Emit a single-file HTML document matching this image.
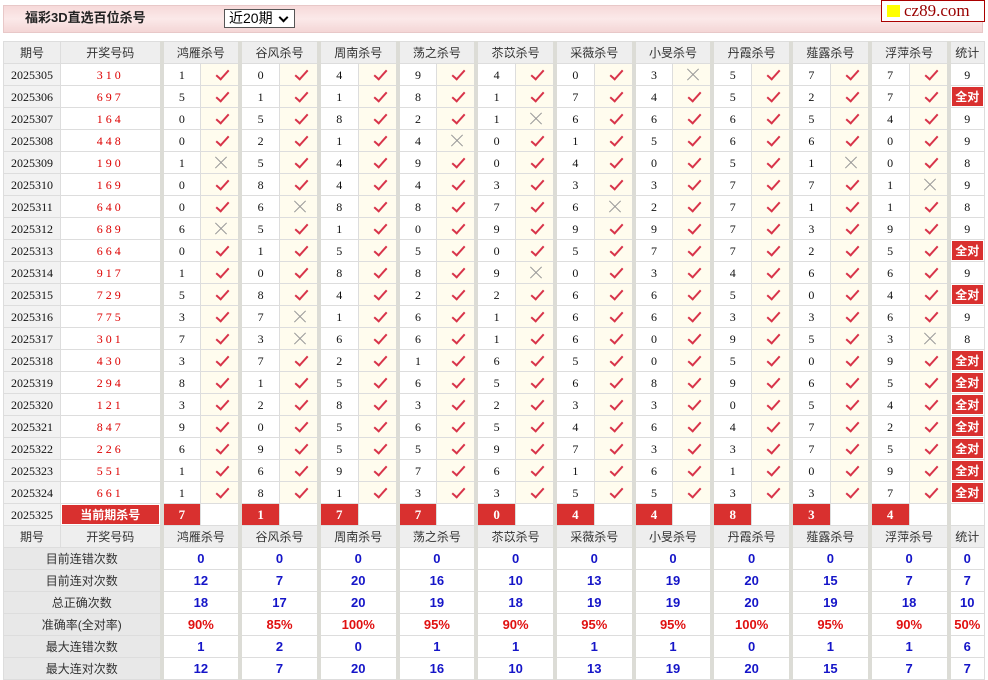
<!DOCTYPE html>
<html><head><meta charset="utf-8"><style>
body{margin:0;background:#fff;width:988px;height:680px;overflow:hidden;position:relative;font-family:"Liberation Sans","Noto Sans CJK SC",sans-serif}
.bar{position:absolute;left:3px;top:5px;width:980px;height:28px;background:linear-gradient(#f6d9d9,#fbe9e9 50%,#f4d6d6);border:1px solid #e8c8c8;box-sizing:border-box}
.bar b{position:absolute;left:21px;top:4px;font-size:13px;line-height:16px;color:#222}
.sel{position:absolute;left:224px;top:9px;width:71px;height:19px;border:1px solid #555;background:#fff;box-sizing:border-box;font-size:14px;line-height:17px;padding-left:4px}
.sel:after{content:"";position:absolute;right:7px;top:4px;width:5px;height:5px;border-right:2px solid #000;border-bottom:2px solid #000;transform:rotate(45deg)}
.logo{position:absolute;left:881px;top:0;width:104px;height:22px;border:1px solid #a00;background:#fff;box-sizing:border-box;font-family:"Liberation Serif",serif;font-size:17px;color:#900;line-height:20px;padding-left:22px}
.logo:before{content:"";position:absolute;left:5px;top:4px;width:13px;height:12px;background:#ff0}
table{position:absolute;left:3px;top:41px;border-collapse:collapse;table-layout:fixed;width:982px}
tr{height:22px}
td{height:21px;line-height:14px;border:1px solid #ddd;padding:0;font-size:12px;text-align:center;font-family:"Liberation Serif","Noto Sans CJK SC",serif;color:#111;position:relative;overflow:hidden}
tr.h td{background:#eee;font-family:"Liberation Sans","Noto Sans CJK SC",sans-serif;color:#333}
td.p{background:#f2f2f2}
td.k{color:#d00;letter-spacing:3px}
td.g{border-left:4px solid #dcdcd6}
td.y,td.x{background:#fffcee}
td.y:after{content:"";position:absolute;left:18px;top:3px;width:5px;height:11px;border-right:2px solid #d8344a;border-bottom:2px solid #d8344a;transform:rotate(42deg)}
td.x:before,td.x:after{content:"";position:absolute;left:12px;top:10px;width:16px;height:1px;background:#999;transform:rotate(45deg)}
td.x:after{transform:rotate(-45deg)}
td.a{background:#d9302f;color:#fff;font-weight:bold;font-family:"Liberation Sans","Noto Sans CJK SC",sans-serif;font-size:12px;box-shadow:inset 0 0 0 1px #fff}
td.r{background:#d9302f;color:#fff;font-weight:bold;font-size:13px}
td.w{background:#fff}
td.l{background:#e8e8e8;font-family:"Liberation Sans","Noto Sans CJK SC",sans-serif;color:#333;font-size:12px}
td.v{color:#1515c8;font-weight:bold;font-family:"Liberation Sans",sans-serif;font-size:13px}
td.v.red{color:#e01010}
</style></head><body>
<div class="bar"><b>福彩3D直选百位杀号</b></div>
<div class="sel">近20期</div>
<div class="logo">cz89.com</div>
<table>
<colgroup><col style="width:57px"><col style="width:101px"><col span="20"><col style="width:36px"></colgroup>
<tr class="h"><td>期号</td><td>开奖号码</td><td class="g" colspan="2">鸿雁杀号</td><td class="g" colspan="2">谷风杀号</td><td class="g" colspan="2">周南杀号</td><td class="g" colspan="2">荡之杀号</td><td class="g" colspan="2">苶苡杀号</td><td class="g" colspan="2">采薇杀号</td><td class="g" colspan="2">小旻杀号</td><td class="g" colspan="2">丹霞杀号</td><td class="g" colspan="2">薤露杀号</td><td class="g" colspan="2">浮萍杀号</td><td class="g">统计</td></tr>
<tr><td class="p">2025305</td><td class="k">310</td><td class="g">1</td><td class="y"></td><td class="g">0</td><td class="y"></td><td class="g">4</td><td class="y"></td><td class="g">9</td><td class="y"></td><td class="g">4</td><td class="y"></td><td class="g">0</td><td class="y"></td><td class="g">3</td><td class="x"></td><td class="g">5</td><td class="y"></td><td class="g">7</td><td class="y"></td><td class="g">7</td><td class="y"></td><td class="g">9</td></tr>
<tr><td class="p">2025306</td><td class="k">697</td><td class="g">5</td><td class="y"></td><td class="g">1</td><td class="y"></td><td class="g">1</td><td class="y"></td><td class="g">8</td><td class="y"></td><td class="g">1</td><td class="y"></td><td class="g">7</td><td class="y"></td><td class="g">4</td><td class="y"></td><td class="g">5</td><td class="y"></td><td class="g">2</td><td class="y"></td><td class="g">7</td><td class="y"></td><td class="g a">全对</td></tr>
<tr><td class="p">2025307</td><td class="k">164</td><td class="g">0</td><td class="y"></td><td class="g">5</td><td class="y"></td><td class="g">8</td><td class="y"></td><td class="g">2</td><td class="y"></td><td class="g">1</td><td class="x"></td><td class="g">6</td><td class="y"></td><td class="g">6</td><td class="y"></td><td class="g">6</td><td class="y"></td><td class="g">5</td><td class="y"></td><td class="g">4</td><td class="y"></td><td class="g">9</td></tr>
<tr><td class="p">2025308</td><td class="k">448</td><td class="g">0</td><td class="y"></td><td class="g">2</td><td class="y"></td><td class="g">1</td><td class="y"></td><td class="g">4</td><td class="x"></td><td class="g">0</td><td class="y"></td><td class="g">1</td><td class="y"></td><td class="g">5</td><td class="y"></td><td class="g">6</td><td class="y"></td><td class="g">6</td><td class="y"></td><td class="g">0</td><td class="y"></td><td class="g">9</td></tr>
<tr><td class="p">2025309</td><td class="k">190</td><td class="g">1</td><td class="x"></td><td class="g">5</td><td class="y"></td><td class="g">4</td><td class="y"></td><td class="g">9</td><td class="y"></td><td class="g">0</td><td class="y"></td><td class="g">4</td><td class="y"></td><td class="g">0</td><td class="y"></td><td class="g">5</td><td class="y"></td><td class="g">1</td><td class="x"></td><td class="g">0</td><td class="y"></td><td class="g">8</td></tr>
<tr><td class="p">2025310</td><td class="k">169</td><td class="g">0</td><td class="y"></td><td class="g">8</td><td class="y"></td><td class="g">4</td><td class="y"></td><td class="g">4</td><td class="y"></td><td class="g">3</td><td class="y"></td><td class="g">3</td><td class="y"></td><td class="g">3</td><td class="y"></td><td class="g">7</td><td class="y"></td><td class="g">7</td><td class="y"></td><td class="g">1</td><td class="x"></td><td class="g">9</td></tr>
<tr><td class="p">2025311</td><td class="k">640</td><td class="g">0</td><td class="y"></td><td class="g">6</td><td class="x"></td><td class="g">8</td><td class="y"></td><td class="g">8</td><td class="y"></td><td class="g">7</td><td class="y"></td><td class="g">6</td><td class="x"></td><td class="g">2</td><td class="y"></td><td class="g">7</td><td class="y"></td><td class="g">1</td><td class="y"></td><td class="g">1</td><td class="y"></td><td class="g">8</td></tr>
<tr><td class="p">2025312</td><td class="k">689</td><td class="g">6</td><td class="x"></td><td class="g">5</td><td class="y"></td><td class="g">1</td><td class="y"></td><td class="g">0</td><td class="y"></td><td class="g">9</td><td class="y"></td><td class="g">9</td><td class="y"></td><td class="g">9</td><td class="y"></td><td class="g">7</td><td class="y"></td><td class="g">3</td><td class="y"></td><td class="g">9</td><td class="y"></td><td class="g">9</td></tr>
<tr><td class="p">2025313</td><td class="k">664</td><td class="g">0</td><td class="y"></td><td class="g">1</td><td class="y"></td><td class="g">5</td><td class="y"></td><td class="g">5</td><td class="y"></td><td class="g">0</td><td class="y"></td><td class="g">5</td><td class="y"></td><td class="g">7</td><td class="y"></td><td class="g">7</td><td class="y"></td><td class="g">2</td><td class="y"></td><td class="g">5</td><td class="y"></td><td class="g a">全对</td></tr>
<tr><td class="p">2025314</td><td class="k">917</td><td class="g">1</td><td class="y"></td><td class="g">0</td><td class="y"></td><td class="g">8</td><td class="y"></td><td class="g">8</td><td class="y"></td><td class="g">9</td><td class="x"></td><td class="g">0</td><td class="y"></td><td class="g">3</td><td class="y"></td><td class="g">4</td><td class="y"></td><td class="g">6</td><td class="y"></td><td class="g">6</td><td class="y"></td><td class="g">9</td></tr>
<tr><td class="p">2025315</td><td class="k">729</td><td class="g">5</td><td class="y"></td><td class="g">8</td><td class="y"></td><td class="g">4</td><td class="y"></td><td class="g">2</td><td class="y"></td><td class="g">2</td><td class="y"></td><td class="g">6</td><td class="y"></td><td class="g">6</td><td class="y"></td><td class="g">5</td><td class="y"></td><td class="g">0</td><td class="y"></td><td class="g">4</td><td class="y"></td><td class="g a">全对</td></tr>
<tr><td class="p">2025316</td><td class="k">775</td><td class="g">3</td><td class="y"></td><td class="g">7</td><td class="x"></td><td class="g">1</td><td class="y"></td><td class="g">6</td><td class="y"></td><td class="g">1</td><td class="y"></td><td class="g">6</td><td class="y"></td><td class="g">6</td><td class="y"></td><td class="g">3</td><td class="y"></td><td class="g">3</td><td class="y"></td><td class="g">6</td><td class="y"></td><td class="g">9</td></tr>
<tr><td class="p">2025317</td><td class="k">301</td><td class="g">7</td><td class="y"></td><td class="g">3</td><td class="x"></td><td class="g">6</td><td class="y"></td><td class="g">6</td><td class="y"></td><td class="g">1</td><td class="y"></td><td class="g">6</td><td class="y"></td><td class="g">0</td><td class="y"></td><td class="g">9</td><td class="y"></td><td class="g">5</td><td class="y"></td><td class="g">3</td><td class="x"></td><td class="g">8</td></tr>
<tr><td class="p">2025318</td><td class="k">430</td><td class="g">3</td><td class="y"></td><td class="g">7</td><td class="y"></td><td class="g">2</td><td class="y"></td><td class="g">1</td><td class="y"></td><td class="g">6</td><td class="y"></td><td class="g">5</td><td class="y"></td><td class="g">0</td><td class="y"></td><td class="g">5</td><td class="y"></td><td class="g">0</td><td class="y"></td><td class="g">9</td><td class="y"></td><td class="g a">全对</td></tr>
<tr><td class="p">2025319</td><td class="k">294</td><td class="g">8</td><td class="y"></td><td class="g">1</td><td class="y"></td><td class="g">5</td><td class="y"></td><td class="g">6</td><td class="y"></td><td class="g">5</td><td class="y"></td><td class="g">6</td><td class="y"></td><td class="g">8</td><td class="y"></td><td class="g">9</td><td class="y"></td><td class="g">6</td><td class="y"></td><td class="g">5</td><td class="y"></td><td class="g a">全对</td></tr>
<tr><td class="p">2025320</td><td class="k">121</td><td class="g">3</td><td class="y"></td><td class="g">2</td><td class="y"></td><td class="g">8</td><td class="y"></td><td class="g">3</td><td class="y"></td><td class="g">2</td><td class="y"></td><td class="g">3</td><td class="y"></td><td class="g">3</td><td class="y"></td><td class="g">0</td><td class="y"></td><td class="g">5</td><td class="y"></td><td class="g">4</td><td class="y"></td><td class="g a">全对</td></tr>
<tr><td class="p">2025321</td><td class="k">847</td><td class="g">9</td><td class="y"></td><td class="g">0</td><td class="y"></td><td class="g">5</td><td class="y"></td><td class="g">6</td><td class="y"></td><td class="g">5</td><td class="y"></td><td class="g">4</td><td class="y"></td><td class="g">6</td><td class="y"></td><td class="g">4</td><td class="y"></td><td class="g">7</td><td class="y"></td><td class="g">2</td><td class="y"></td><td class="g a">全对</td></tr>
<tr><td class="p">2025322</td><td class="k">226</td><td class="g">6</td><td class="y"></td><td class="g">9</td><td class="y"></td><td class="g">5</td><td class="y"></td><td class="g">5</td><td class="y"></td><td class="g">9</td><td class="y"></td><td class="g">7</td><td class="y"></td><td class="g">3</td><td class="y"></td><td class="g">3</td><td class="y"></td><td class="g">7</td><td class="y"></td><td class="g">5</td><td class="y"></td><td class="g a">全对</td></tr>
<tr><td class="p">2025323</td><td class="k">551</td><td class="g">1</td><td class="y"></td><td class="g">6</td><td class="y"></td><td class="g">9</td><td class="y"></td><td class="g">7</td><td class="y"></td><td class="g">6</td><td class="y"></td><td class="g">1</td><td class="y"></td><td class="g">6</td><td class="y"></td><td class="g">1</td><td class="y"></td><td class="g">0</td><td class="y"></td><td class="g">9</td><td class="y"></td><td class="g a">全对</td></tr>
<tr><td class="p">2025324</td><td class="k">661</td><td class="g">1</td><td class="y"></td><td class="g">8</td><td class="y"></td><td class="g">1</td><td class="y"></td><td class="g">3</td><td class="y"></td><td class="g">3</td><td class="y"></td><td class="g">5</td><td class="y"></td><td class="g">5</td><td class="y"></td><td class="g">3</td><td class="y"></td><td class="g">3</td><td class="y"></td><td class="g">7</td><td class="y"></td><td class="g a">全对</td></tr>
<tr><td class="p">2025325</td><td class="a">当前期杀号</td><td class="g r">7</td><td class="w"></td><td class="g r">1</td><td class="w"></td><td class="g r">7</td><td class="w"></td><td class="g r">7</td><td class="w"></td><td class="g r">0</td><td class="w"></td><td class="g r">4</td><td class="w"></td><td class="g r">4</td><td class="w"></td><td class="g r">8</td><td class="w"></td><td class="g r">3</td><td class="w"></td><td class="g r">4</td><td class="w"></td><td class="g w"></td></tr>
<tr class="h"><td>期号</td><td>开奖号码</td><td class="g" colspan="2">鸿雁杀号</td><td class="g" colspan="2">谷风杀号</td><td class="g" colspan="2">周南杀号</td><td class="g" colspan="2">荡之杀号</td><td class="g" colspan="2">苶苡杀号</td><td class="g" colspan="2">采薇杀号</td><td class="g" colspan="2">小旻杀号</td><td class="g" colspan="2">丹霞杀号</td><td class="g" colspan="2">薤露杀号</td><td class="g" colspan="2">浮萍杀号</td><td class="g">统计</td></tr>
<tr><td class="l" colspan="2">目前连错次数</td><td class="g v" colspan="2">0</td><td class="g v" colspan="2">0</td><td class="g v" colspan="2">0</td><td class="g v" colspan="2">0</td><td class="g v" colspan="2">0</td><td class="g v" colspan="2">0</td><td class="g v" colspan="2">0</td><td class="g v" colspan="2">0</td><td class="g v" colspan="2">0</td><td class="g v" colspan="2">0</td><td class="g v">0</td></tr>
<tr><td class="l" colspan="2">目前连对次数</td><td class="g v" colspan="2">12</td><td class="g v" colspan="2">7</td><td class="g v" colspan="2">20</td><td class="g v" colspan="2">16</td><td class="g v" colspan="2">10</td><td class="g v" colspan="2">13</td><td class="g v" colspan="2">19</td><td class="g v" colspan="2">20</td><td class="g v" colspan="2">15</td><td class="g v" colspan="2">7</td><td class="g v">7</td></tr>
<tr><td class="l" colspan="2">总正确次数</td><td class="g v" colspan="2">18</td><td class="g v" colspan="2">17</td><td class="g v" colspan="2">20</td><td class="g v" colspan="2">19</td><td class="g v" colspan="2">18</td><td class="g v" colspan="2">19</td><td class="g v" colspan="2">19</td><td class="g v" colspan="2">20</td><td class="g v" colspan="2">19</td><td class="g v" colspan="2">18</td><td class="g v">10</td></tr>
<tr><td class="l" colspan="2">准确率(全对率)</td><td class="g v red" colspan="2">90%</td><td class="g v red" colspan="2">85%</td><td class="g v red" colspan="2">100%</td><td class="g v red" colspan="2">95%</td><td class="g v red" colspan="2">90%</td><td class="g v red" colspan="2">95%</td><td class="g v red" colspan="2">95%</td><td class="g v red" colspan="2">100%</td><td class="g v red" colspan="2">95%</td><td class="g v red" colspan="2">90%</td><td class="g v red">50%</td></tr>
<tr><td class="l" colspan="2">最大连错次数</td><td class="g v" colspan="2">1</td><td class="g v" colspan="2">2</td><td class="g v" colspan="2">0</td><td class="g v" colspan="2">1</td><td class="g v" colspan="2">1</td><td class="g v" colspan="2">1</td><td class="g v" colspan="2">1</td><td class="g v" colspan="2">0</td><td class="g v" colspan="2">1</td><td class="g v" colspan="2">1</td><td class="g v">6</td></tr>
<tr><td class="l" colspan="2">最大连对次数</td><td class="g v" colspan="2">12</td><td class="g v" colspan="2">7</td><td class="g v" colspan="2">20</td><td class="g v" colspan="2">16</td><td class="g v" colspan="2">10</td><td class="g v" colspan="2">13</td><td class="g v" colspan="2">19</td><td class="g v" colspan="2">20</td><td class="g v" colspan="2">15</td><td class="g v" colspan="2">7</td><td class="g v">7</td></tr>
</table>
</body></html>
